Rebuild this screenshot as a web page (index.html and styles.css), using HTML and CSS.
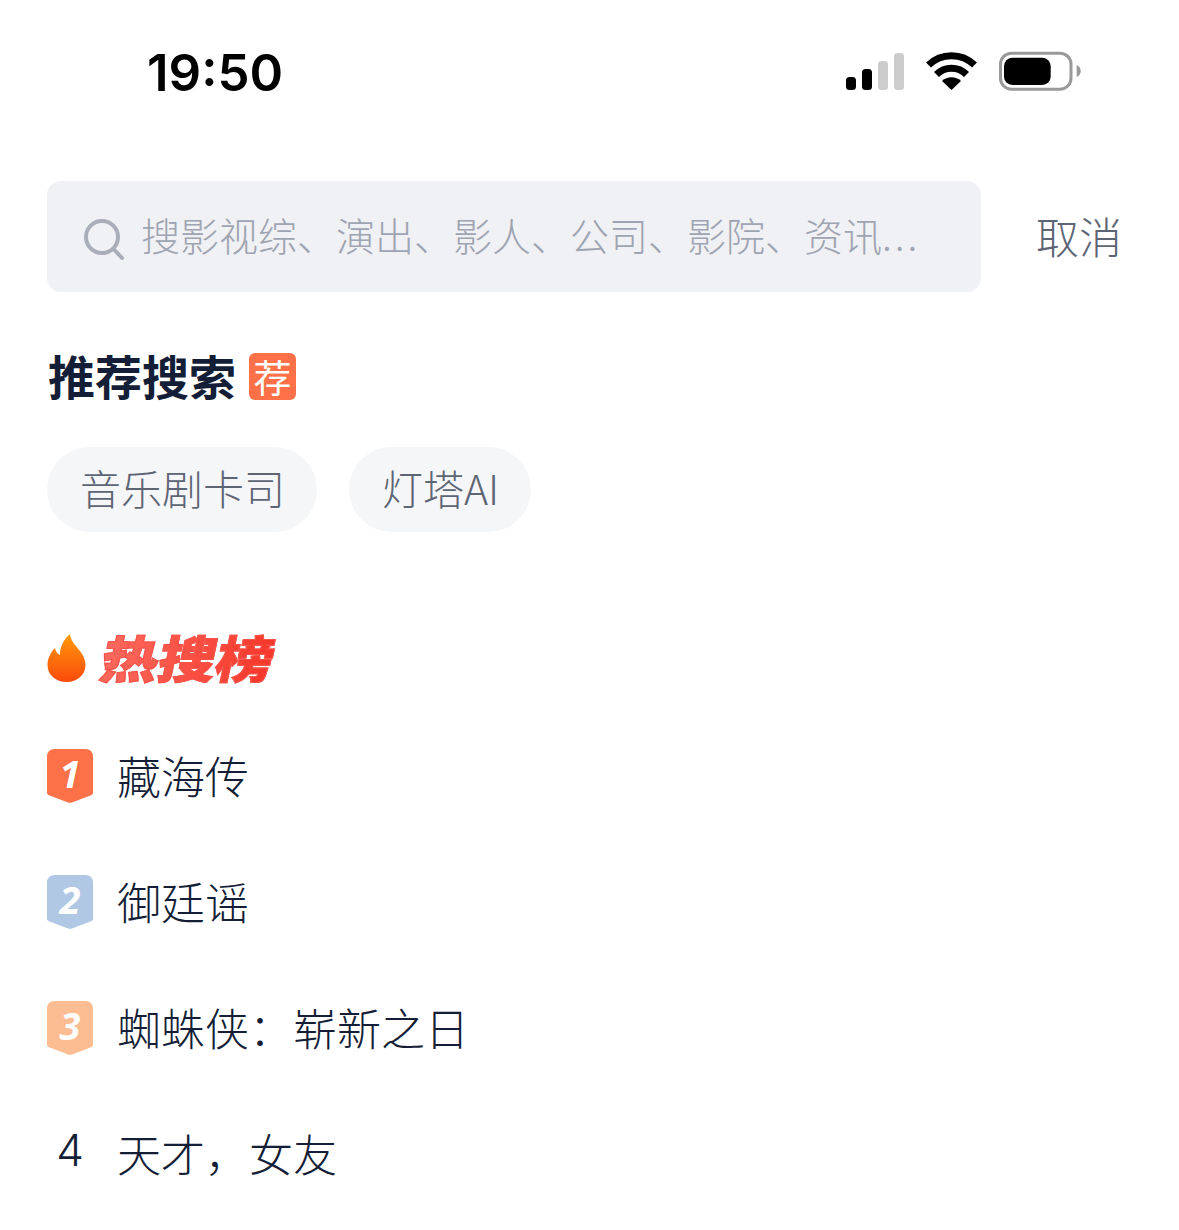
FILE: index.html
```html
<!DOCTYPE html>
<html lang="zh-CN">
<head>
    <meta charset="UTF-8">
    <title>搜索</title>
    <link rel="stylesheet" href="styles.css">
</head>
<body>
    <div class="status-bar">
        <span class="time">19:50</span>
        <div class="status-icons">
            <svg class="signal" width="60" height="38" viewBox="0 0 60 38">
                <rect x="0" y="25" width="10" height="13" rx="3.5" fill="#000"/>
                <rect x="16" y="17" width="10" height="21" rx="3.5" fill="#000"/>
                <rect x="32" y="9" width="10" height="29" rx="3.5" fill="#ccc"/>
                <rect x="48" y="1" width="10" height="37" rx="3.5" fill="#ccc"/>
            </svg>
            <svg class="wifi" width="52" height="38" viewBox="0 0 52 38">
                <path d="M2.500 13 A33 33 0 0 1 48.500 13" fill="none" stroke="#000" stroke-width="7"/>
                <path d="M10.500 22.500 A21 21 0 0 1 40.500 22.500" fill="none" stroke="#000" stroke-width="7"/>
                <path d="M25.500 38 L16 29 A14 14 0 0 1 35 29 Z" fill="#000"/>
            </svg>
            <svg class="battery" width="84" height="40" viewBox="0 0 84 40">
                <rect x="2.500" y="2.200" width="70.500" height="36" rx="11" fill="none" stroke="#999" stroke-width="3"/>
                <rect x="6" y="6.700" width="46.700" height="27.300" rx="8.500" fill="#000"/>
                <path d="M78.700 14 Q82.700 16 82.700 20 Q82.700 24 78.700 26 Z" fill="#999"/>
            </svg>
        </div>
    </div>

    <div class="search-row">
        <div class="search-box">
            <svg class="search-icon" width="44" height="44" viewBox="0 0 44 44">
                <circle cx="20" cy="20" r="16" fill="none" stroke="#a9aeb9" stroke-width="4"/>
                <path d="M32.500 33 L40 41" fill="none" stroke="#a9aeb9" stroke-width="4" stroke-linecap="round"/>
            </svg>
            <span class="placeholder">搜影视综、演出、影人、公司、影院、资讯<span class="dots">...</span></span>
        </div>
        <span class="cancel">取消</span>
    </div>

    <section class="recommend">
        <div class="section-title">
            <h2>推荐搜索</h2>
            <span class="rec-badge">荐</span>
        </div>
        <div class="tags">
            <span class="tag">音乐剧卡司</span>
            <span class="tag">灯塔AI</span>
        </div>
    </section>

    <section class="hot">
        <div class="hot-title">
            <svg width="40" height="48" viewBox="0 0 40 48">
                <defs>
                    <linearGradient id="flame" x1="0" y1="0" x2="0" y2="1">
                        <stop offset="0" stop-color="#ff9a0a"/>
                        <stop offset="1" stop-color="#fb4a0c"/>
                    </linearGradient>
                </defs>
                <path d="M23 0 C24 9 31 13 35 20 C38 25 38.500 29 38.500 31 C38.500 41 30 48 19.500 48 C9 48 0.500 41 0.500 31 C0.500 24 4 18 8 14 C9 18 10.500 20 13 21 C13 13 16 6 23 0 Z" fill="url(#flame)"/>
            </svg>
            <span class="hot-text">热搜榜</span>
        </div>
        <ul class="hot-list">
            <li>
                <span class="rank rank-1">1</span>
                <span class="name">藏海传</span>
            </li>
            <li>
                <span class="rank rank-2">2</span>
                <span class="name">御廷谣</span>
            </li>
            <li>
                <span class="rank rank-3">3</span>
                <span class="name">蜘蛛侠：崭新之日</span>
            </li>
            <li>
                <span class="rank rank-plain">4</span>
                <span class="name">天才，女友</span>
            </li>
        </ul>
    </section>
</body>
</html>
```

FILE: styles.css
```css
* {
    box-sizing: border-box;
}
html, body {
    height: 1230px;
    overflow: hidden;
}
body {
    margin: 0;
    background: #fff;
    font-family: "Noto Sans CJK SC", "Inter", sans-serif;
    font-weight: 300;
    color: #141e36;
}
.status-bar {
    display: flex;
    justify-content: space-between;
    align-items: center;
    height: 142px;
    padding: 0 97px 0 147px;
}
.time {
    font-family: "Inter", sans-serif;
    font-size: 51px;
    font-weight: 600;
    color: #000;
    line-height: 1;
    padding-top: 2px;
}
.status-icons {
    display: flex;
    align-items: center;
    gap: 20px;
}
.search-row {
    display: flex;
    align-items: center;
    margin-top: 39px;
    padding-left: 47px;
}
.search-box {
    display: flex;
    align-items: center;
    width: 934px;
    height: 111px;
    padding-left: 35px;
    background: #f0f1f4;
    border-radius: 14px;
}
.search-icon {
    flex: none;
    margin-right: 15px;
    margin-top: 4px;
}
.placeholder {
    font-size: 39px;
    color: #9ea4b1;
    white-space: nowrap;
    padding-bottom: 6px;
}
.dots {
    letter-spacing: 3px;
}
.cancel {
    margin-left: 55px;
    font-size: 43px;
    color: #5d6575;
    padding-bottom: 4px;
}
.recommend {
    padding: 0 47px;
}
.section-title {
    display: flex;
    align-items: center;
    margin-top: 47px;
    height: 72px;
}
.section-title h2 {
    margin: 0 0 0 1px;
    font-size: 47px;
    font-weight: 700;
    line-height: 72px;
    color: #141e36;
}
.rec-badge {
    display: flex;
    align-items: center;
    justify-content: center;
    width: 47px;
    height: 47px;
    margin: 2px 0 0 13px;
    background: #fe7148;
    border-radius: 6px;
    color: #fff;
    font-size: 38px;
    font-weight: 400;
    line-height: 1;
}
.tags {
    display: flex;
    gap: 32px;
    margin-top: 36px;
}
.tag {
    display: flex;
    align-items: center;
    height: 85px;
    padding: 0 32px 6px 33px;
    background: #f5f6f8;
    border-radius: 43px;
    font-size: 41px;
    color: #5d6575;
}
.hot {
    padding: 0 47px;
}
.hot-title {
    display: flex;
    align-items: center;
    margin-top: 99px;
    height: 54px;
}
.hot-text {
    margin-left: 15px;
    padding-bottom: 4px;
    font-size: 50px;
    font-weight: 900;
    line-height: 54px;
    transform: skewX(-12deg) scaleX(1.15);
    transform-origin: left center;
    -webkit-text-stroke: 1px #f8544a;
    background: linear-gradient(90deg, #fb6a5e, #f5372a);
    -webkit-background-clip: text;
    background-clip: text;
    color: transparent;
}
.hot-list {
    list-style: none;
    margin: 28px 0 0;
    padding: 0;
}
.hot-list li {
    display: flex;
    align-items: center;
    height: 126px;
    font-size: 44px;
    color: #141e36;
}
.name {
    padding-bottom: 2px;
}
.rank {
    flex: none;
    display: flex;
    align-items: center;
    justify-content: center;
    width: 46px;
    height: 54px;
    margin-right: 24px;
    padding-bottom: 6px;
    color: #fff;
    font-family: "Open Sans", sans-serif;
    font-size: 38px;
    font-weight: 700;
    font-style: italic;
    clip-path: path("M8 0 H38 Q46 0 46 8 V44 Q46 45.500 44 46.200 L25 53.500 Q23 54.200 21 53.500 L2 46.200 Q0 45.500 0 44 V8 Q0 0 8 0 Z");
}
.rank-1 {
    background: #fd7149;
}
.rank-2 {
    background: #b0c8e4;
}
.rank-3 {
    background: #fdbd92;
}
.rank-plain {
    color: #141e36;
    font-family: "Inter", sans-serif;
    font-size: 44px;
    font-weight: 300;
    font-style: normal;
    padding-bottom: 8px;
    clip-path: none;
}
```
